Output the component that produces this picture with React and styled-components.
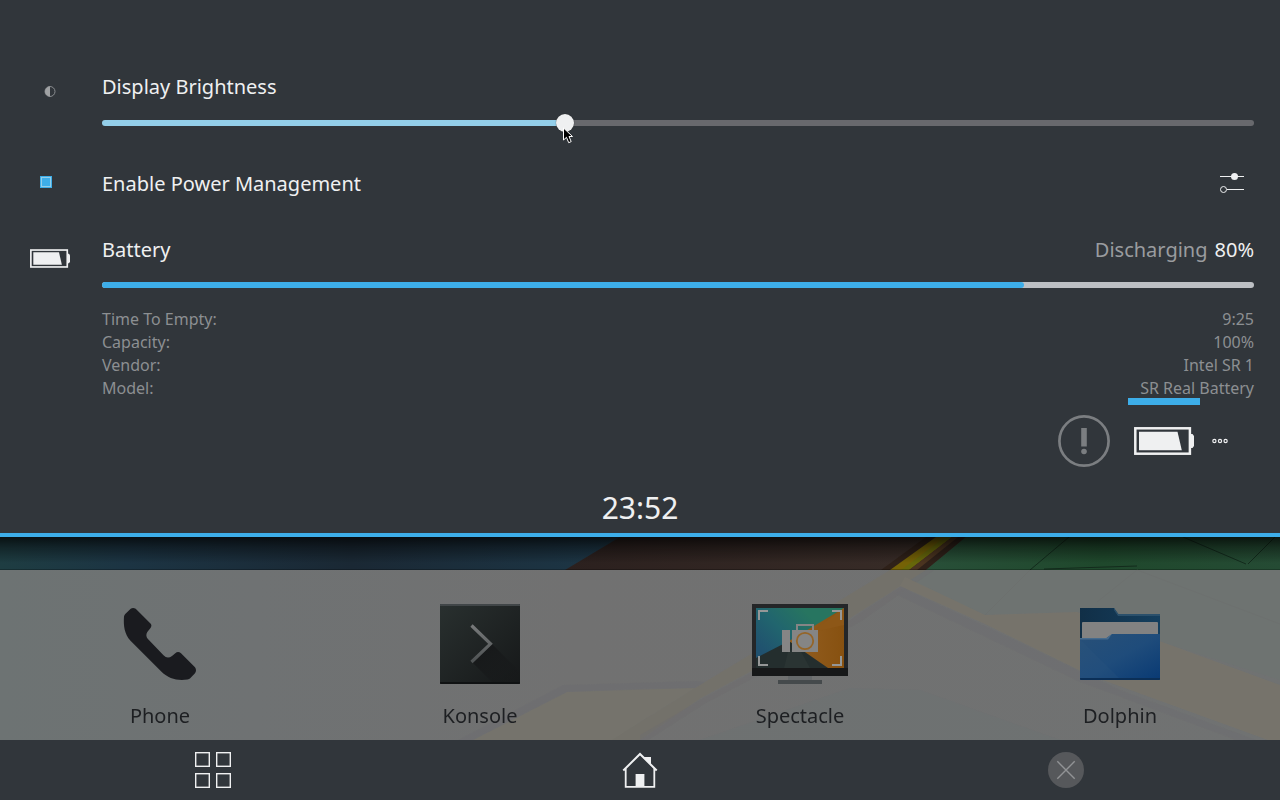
import React, { useState } from "react";
import styled, { createGlobalStyle } from "styled-components";

const GlobalStyle = createGlobalStyle`
  * { box-sizing: border-box; }
  body { margin: 0; background: #31363b; color: #eff0f1; }
  body, button, input { font-family: "Noto Sans", sans-serif; }
  svg { display: block; flex: none; }
  dl, dd, dt, ul { margin: 0; padding: 0; }
`;

const Screen = styled.div`
  display: flex;
  flex-direction: column;
  min-height: 100vh;
`;

const Panel = styled.section`
  display: flex;
  flex-direction: column;
  padding-top: 73px;
  border-bottom: 4px solid #3daee9;
  background: #31363b;
`;

const Row = styled.div`
  display: grid;
  grid-template-columns: 100px 1fr;
  column-gap: 2px;
  padding-right: 26px;
  margin-bottom: ${(p) => p.$space || 0}px;
`;

const IconCell = styled.div`
  display: flex;
  align-items: center;
  justify-content: center;
  height: ${(p) => p.$height}px;
`;

const Line = styled.div`
  display: flex;
  align-items: center;
  justify-content: space-between;
  height: 28px;
`;

const Label = styled.label`
  font-size: 20px;
  line-height: 28px;
`;

const State = styled.span`
  display: flex;
  gap: 7px;
  font-size: 20px;
  line-height: 28px;
  color: #9a9c9f;
`;

const Percent = styled.span`
  color: #eff0f1;
`;

const SliderBox = styled.div`
  position: relative;
  display: flex;
  margin-top: 13px;
`;

const Slider = styled.input`
  appearance: none;
  width: 100%;
  height: 18px;
  margin: 0;
  background: none;
  outline: none;

  &::-webkit-slider-runnable-track {
    height: 6px;
    border-radius: 3px;
    background: linear-gradient(
      to right,
      #93cee9 ${(p) => p.$value}%,
      #68696d ${(p) => p.$value}%
    );
  }

  &::-webkit-slider-thumb {
    appearance: none;
    width: 18px;
    height: 18px;
    margin-top: -6px;
    border-radius: 50%;
    background: #eff0f1;
    box-shadow: 0 0 1px #222;
  }
`;

const Pointer = styled.svg`
  position: absolute;
  top: 13px;
  left: 40%;
  pointer-events: none;
`;

const CheckSlot = styled.div`
  display: flex;
  align-items: flex-start;
  width: 20px;
  height: 16px;
`;

const Check = styled.input`
  appearance: none;
  width: 12px;
  height: 12px;
  margin: 0;
  border: 1px solid #3daee9;
  background: #31363b;

  &:checked {
    background: #3daee9;
    box-shadow: inset 0 0 0 1px #93cee9;
  }
`;

const IconButton = styled.button`
  display: flex;
  align-items: center;
  justify-content: center;
  width: 44px;
  height: 28px;
  padding: 0;
  border: 0;
  background: none;
  color: #eff0f1;
`;

const Charge = styled.progress`
  appearance: none;
  display: block;
  width: 100%;
  height: 6px;
  margin: 18px 0 20px;
  border: 0;
  border-radius: 3px;
  overflow: hidden;
  background: #bdc3c7;

  &::-webkit-progress-bar { background: #bdc0c4; }
  &::-webkit-progress-value { background: #3daee9; border-radius: 0 3px 3px 0; }
`;

const Details = styled.dl`
  display: flex;
  flex-direction: column;
`;

const Detail = styled.div`
  display: flex;
  justify-content: space-between;
  font-size: 16px;
  line-height: 23px;
  color: #8c8f92;
`;

const Tray = styled.div`
  display: flex;
  align-items: center;
  justify-content: flex-end;
  gap: 8px;
  height: 82px;
  padding-right: 48px;
`;

const TrayButton = styled.button`
  position: relative;
  display: flex;
  align-items: center;
  justify-content: center;
  width: ${(p) => p.$width || 72}px;
  height: 82px;
  padding: 0;
  border: 0;
  background: none;
  color: ${(p) => (p.$muted ? "#7b7e81" : "#eff0f1")};
`;

const ActiveMark = styled.span`
  position: absolute;
  top: -2px;
  left: 0;
  right: 0;
  height: 7px;
  background: #3daee9;
`;

const Clock = styled.time`
  padding: 6px 0 5px;
  font-size: 30px;
  line-height: 40px;
  text-align: center;
`;

const Home = styled.main`
  position: relative;
  display: flex;
  flex: 1;
  flex-direction: column;
  justify-content: flex-end;
  padding-top: 33px;
  overflow: hidden;
`;

const Wallpaper = styled.svg`
  position: absolute;
  inset: 0;
  width: 100%;
  height: 100%;
`;

const Dock = styled.nav`
  position: relative;
  display: grid;
  grid-template-columns: repeat(4, 1fr);
`;

const AppButton = styled.button`
  display: flex;
  flex-direction: column;
  align-items: center;
  gap: 18px;
  padding: 34px 0 10px;
  border: 0;
  background: none;
  color: #1d1f22;
  font-size: 20px;
  line-height: 28px;
`;

const NavBar = styled.nav`
  display: grid;
  grid-template-columns: repeat(3, 1fr);
  height: 60px;
  background: #31363b;
`;

const NavButton = styled.button`
  display: flex;
  align-items: center;
  justify-content: center;
  padding: 0;
  border: 0;
  background: none;
  color: #eff0f1;
`;

function BatteryIcon({ width, height }) {
  return (
    <svg width={width} height={height} viewBox="0 0 60 28" aria-hidden="true">
      <rect x="1.3" y="1.3" width="54.6" height="25.4" fill="none" stroke="currentColor" strokeWidth="2.5" />
      <path d="M5 4.8H43.5L47.8 23.2H5Z" fill="currentColor" />
      <path d="M57 7H58.5L60 9V19L58.5 21H57Z" fill="currentColor" />
    </svg>
  );
}

function BrightnessIcon() {
  return (
    <svg width="12" height="12" viewBox="0 0 12 12" aria-hidden="true">
      <circle cx="6" cy="6.5" r="5" fill="none" stroke="#898c8f" />
      <path d="M6 1.5A5 5 0 0 0 6 11.5Z" fill="#a0a2a4" />
    </svg>
  );
}

function TuneIcon() {
  return (
    <svg width="24" height="22" viewBox="0 0 24 22" aria-hidden="true">
      <path d="M0 3.5H24M7 16.5H24" stroke="currentColor" />
      <circle cx="14.5" cy="3.5" r="3.5" fill="currentColor" />
      <circle cx="3.5" cy="16.5" r="3" fill="none" stroke="currentColor" />
    </svg>
  );
}

function AlertIcon() {
  return (
    <svg width="52" height="52" viewBox="0 0 52 52" aria-hidden="true">
      <circle cx="26" cy="26" r="24.6" fill="none" stroke="currentColor" strokeWidth="2.7" />
      <rect x="23.2" y="13" width="5.6" height="18.5" fill="currentColor" />
      <circle cx="26" cy="36.5" r="2.8" fill="currentColor" />
    </svg>
  );
}

function DotsIcon() {
  return (
    <svg width="16" height="6" viewBox="0 0 16 6" fill="none" stroke="currentColor" strokeWidth="1.2" aria-hidden="true">
      <circle cx="2.4" cy="3" r="1.6" />
      <circle cx="8" cy="3" r="1.6" />
      <circle cx="13.6" cy="3" r="1.6" />
    </svg>
  );
}

function PhoneIcon() {
  return (
    <svg width="96" height="80" viewBox="0 0 96 80" aria-hidden="true">
      <path
        fill="#1a1b1f"
        d="M12 12.5Q12.300 11 13.500 9.800L18.700 4.800Q21 3 23.700 4.800L38.700 19.700Q40.300 21.600 38.300 24.200L35.300 28Q33.200 31.500 35.700 34.800L51.500 51.300Q55.500 55.500 60 52L63.300 49.200Q66 46.700 69 49.200L83 63.200Q85 66 83 69.300L78.200 74.200Q77.300 75.200 75.500 75.500C65 77 56.500 74.500 49.500 67.700L18.500 36.700C12.500 30 11.300 22 12 12.500Z"
      />
    </svg>
  );
}

function KonsoleIcon() {
  return (
    <svg width="96" height="80" viewBox="0 0 96 80" aria-hidden="true">
      <defs>
        <linearGradient id="konsole" x1="0" y1="0" x2="1" y2="1">
          <stop offset="0" stopColor="#29302f" />
          <stop offset="1" stopColor="#161819" />
        </linearGradient>
        <linearGradient id="konsoleShade" x1="0" y1="0" x2="1" y2="1">
          <stop offset="0.2" stopColor="#17191a" />
          <stop offset="1" stopColor="#17191a" stopOpacity="0.2" />
        </linearGradient>
        <linearGradient id="chevron" x1="0" y1="0" x2="0" y2="1">
          <stop offset="0" stopColor="#77797a" />
          <stop offset="1" stopColor="#4e5253" />
        </linearGradient>
      </defs>
      <rect x="8" width="80" height="80" rx="1" fill="url(#konsole)" />
      <path d="M60 40L88 68V78H60L40 58Z" fill="url(#konsoleShade)" />
      <path d="M8 1Q8 0 9 0H87Q88 0 88 1V2H8Z" fill="#414648" />
      <path d="M8 78H88V79Q88 80 87 80H9Q8 80 8 79Z" fill="#101213" />
      <path d="M39.500 21.500L58.500 39.800L39.500 58" fill="none" stroke="url(#chevron)" strokeWidth="3.200" />
    </svg>
  );
}

function SpectacleIcon() {
  return (
    <svg width="96" height="80" viewBox="0 0 96 80" aria-hidden="true">
      <defs>
        <linearGradient id="specSky" gradientUnits="userSpaceOnUse" x1="8" y1="46" x2="50" y2="4">
          <stop offset="0" stopColor="#20516f" />
          <stop offset="0.500" stopColor="#21656e" />
          <stop offset="1" stopColor="#277560" />
        </linearGradient>
        <linearGradient id="specSun" x1="0" y1="0" x2="1" y2="0">
          <stop offset="0" stopColor="#945f22" />
          <stop offset="1" stopColor="#875110" />
        </linearGradient>
      </defs>
      <rect width="96" height="72" fill="#242628" />
      <rect y="64" width="96" height="8" fill="#171819" />
      <rect x="4" y="4" width="88" height="60" fill="url(#specSky)" />
      <path d="M4 54L37 37L80 64H4Z" fill="#242e2e" />
      <path d="M36 48L46 42L58 64H32Z" fill="#2a3433" />
      <path d="M92 4V64H76L37 37Z" fill="url(#specSun)" />
      <path d="M92 21L58 29L92 4Z" fill="#8d5717" />
      <path d="M7 16V7H16M80 7H89V16M7 52V61H16M80 61H89V52" fill="none" stroke="#959797" strokeWidth="2" />
      <rect x="30" y="26" width="8" height="22" fill="#858585" />
      <rect x="40" y="26" width="26" height="22" fill="#858585" />
      <path d="M45 26V21H61V26" fill="none" stroke="#858585" strokeWidth="2" />
      <circle cx="53" cy="37" r="8.200" fill="#858585" stroke="#956528" strokeWidth="1.800" />
      <rect x="36" y="72" width="24" height="4" fill="#65686a" />
      <rect x="26" y="76" width="44" height="4" fill="#454a4c" />
    </svg>
  );
}

function FolderIcon() {
  return (
    <svg width="96" height="80" viewBox="0 0 96 80" aria-hidden="true">
      <defs>
        <linearGradient id="folder" x1="0" y1="0" x2="1" y2="1">
          <stop offset="0" stopColor="#285078" />
          <stop offset="0.500" stopColor="#1f4c7b" />
          <stop offset="1" stopColor="#093a74" />
        </linearGradient>
        <linearGradient id="folderBack" x1="0" y1="0" x2="1" y2="0">
          <stop offset="0" stopColor="#112f47" />
          <stop offset="1" stopColor="#153f5e" />
        </linearGradient>
      </defs>
      <path d="M8 4H42L46 10H88V60H8Z" fill="url(#folderBack)" />
      <path d="M42 4L46.500 10H88V12H46L42 6Z" fill="#2b506b" />
      <path d="M10 19Q10 18 11 18H85Q86 18 86 19V50H10Z" fill="#828282" />
      <path d="M8 34H34.500L40 30H88V75Q88 76 87 76H9Q8 76 8 75Z" fill="url(#folder)" />
      <path d="M8 34H34.500L40 30L36 35.500H8Z" fill="#466b8d" />
      <path d="M8 35.500L47 74H8Z" fill="#315b83" opacity="0.200" />
      <path d="M8 74H88V75Q88 76 87 76H9Q8 76 8 75Z" fill="#0b2f57" />
    </svg>
  );
}

function OverviewIcon() {
  return (
    <svg width="36" height="36" viewBox="0 0 36 36" fill="none" stroke="currentColor" strokeWidth="1.400" aria-hidden="true">
      <rect x="0.700" y="0.700" width="13.600" height="13.600" />
      <rect x="21.700" y="0.700" width="13.600" height="13.600" />
      <rect x="0.700" y="21.700" width="13.600" height="13.600" />
      <rect x="21.700" y="21.700" width="13.600" height="13.600" />
    </svg>
  );
}

function HomeIcon() {
  return (
    <svg width="36" height="36" viewBox="0 0 36 36" aria-hidden="true">
      <path d="M1.300 18.500L18 2L34.700 18.500" fill="none" stroke="currentColor" strokeWidth="2" />
      <path d="M3.700 16.500V34.800H32.300V16.500" fill="none" stroke="currentColor" strokeWidth="1.800" />
      <path d="M21 5H29V13.500Z" fill="currentColor" />
      <rect x="13.600" y="22" width="8.800" height="13" fill="currentColor" />
    </svg>
  );
}

function CloseIcon() {
  return (
    <svg width="38" height="36" viewBox="0 0 38 36" aria-hidden="true">
      <circle cx="18" cy="18" r="18" fill="#56585b" />
      <path d="M9.300 9.300L26.700 26.700M26.700 9.300L9.300 26.700" stroke="#919395" strokeWidth="1.400" />
    </svg>
  );
}

function Backdrop() {
  return (
    <Wallpaper viewBox="0 537 1280 203" preserveAspectRatio="none" aria-hidden="true">
      <defs>
        <linearGradient id="sea" x1="0" y1="0" x2="1" y2="0">
          <stop offset="0" stopColor="#1e3d42" />
          <stop offset="0.200" stopColor="#1c3443" />
          <stop offset="0.550" stopColor="#1a2834" />
          <stop offset="1" stopColor="#1d3848" />
        </linearGradient>
        <linearGradient id="earth" x1="0" y1="0" x2="1" y2="0">
          <stop offset="0" stopColor="#2b201e" />
          <stop offset="1" stopColor="#3a2e29" />
        </linearGradient>
        <linearGradient id="grass" x1="0" y1="0" x2="1" y2="0">
          <stop offset="0" stopColor="#284f38" />
          <stop offset="0.500" stopColor="#1f482c" />
          <stop offset="1" stopColor="#254b34" />
        </linearGradient>
        <linearGradient id="mist" x1="0" y1="0" x2="1" y2="0">
          <stop offset="0" stopColor="#6d7373" />
          <stop offset="0.200" stopColor="#6f7273" />
          <stop offset="0.450" stopColor="#717171" />
          <stop offset="1" stopColor="#707272" />
        </linearGradient>
        <linearGradient id="cast" x1="0" y1="0" x2="0" y2="1">
          <stop offset="0" stopColor="#000" stopOpacity="0.720" />
          <stop offset="0.400" stopColor="#000" stopOpacity="0.380" />
          <stop offset="1" stopColor="#000" stopOpacity="0" />
        </linearGradient>
      </defs>
      <rect y="537" width="640" height="33" fill="url(#sea)" />
      <path d="M620 537H980V570H565Z" fill="url(#earth)" />
      <path d="M926 537H966L926 570H881Z" fill="#2f2119" />
      <path d="M936 537H952L909 570H890Z" fill="#756206" />
      <path d="M945 537H952L909 570H901Z" fill="#67670a" />
      <path d="M952 537H958L917 570H909Z" fill="#4b3420" />
      <path d="M966 537H1280V570H926Z" fill="url(#grass)" />
      <path d="M1069 537L1030 570M1183 537L1246 564M1275 537L1248 564M1044 569L1137 566" fill="none" stroke="#132b1c" />
      <rect y="537" width="1280" height="26" fill="url(#cast)" />
      <rect y="569" width="1280" height="1" fill="#000" opacity="0.250" />

      <rect y="570" width="1280" height="170" fill="url(#mist)" />
      <g opacity="0.750">
        <path d="M926 570H1280V680L1162 642L1077 612L985 615L905 580Z" fill="#6e7472" />
        <path d="M982 618L1030 570M1097 602L1137 570L1280 624" fill="none" stroke="#6b6f6d" opacity="0.600" />
        <path d="M890 570H926L844 622L701 698L640 740H610L640 722L695 688Z" fill="#757269" />
        <path d="M926 570L850 620L700 700L640 735V740H648L704 704L860 622L934 570Z" fill="#6d6c6d" opacity="0.500" />
        <path d="M905 577L985 615L1077 612L1162 642L1280 685V740L1268 740L1089 675L985 624L900 586Z" fill="#79756a" />
        <path d="M903 588L985 626L1120 690L1256 740H1236L1080 682L895 594Z" fill="#6e6d70" opacity="0.700" />
        <path d="M473 740L567 692L640 689L695 688L640 722L612 740Z" fill="#77756b" />
        <path d="M458 740L563 685L695 681L705 682L695 688L567 692L473 740Z" fill="#6d6d70" opacity="0.700" />
        <path d="M700 740L850 688L920 690L1060 740Z" fill="#6d7273" opacity="0.600" />
      </g>
    </Wallpaper>
  );
}

const details = [
  ["Time To Empty:", "9:25"],
  ["Capacity:", "100%"],
  ["Vendor:", "Intel SR 1"],
  ["Model:", "SR Real Battery"],
];

const apps = [
  ["Phone", PhoneIcon],
  ["Konsole", KonsoleIcon],
  ["Spectacle", SpectacleIcon],
  ["Dolphin", FolderIcon],
];

export default function App() {
  const [brightness, setBrightness] = useState(40);
  const [managed, setManaged] = useState(true);

  return (
    <Screen>
      <GlobalStyle />
      <Panel>
        <Row $space={38}>
          <IconCell $height={36}>
            <BrightnessIcon />
          </IconCell>
          <div>
            <Line>
              <Label htmlFor="brightness">Display Brightness</Label>
            </Line>
            <SliderBox>
              <Slider
                id="brightness"
                type="range"
                min="0"
                max="100"
                value={brightness}
                $value={brightness}
                onChange={(e) => setBrightness(Number(e.target.value))}
              />
              <Pointer width="14" height="18" viewBox="0 0 14 18" aria-hidden="true">
                <path
                  d="M0.500 1V13L3.500 10.300L5.700 15.700L8.200 14.600L6 9.500H9.500Z"
                  fill="#000"
                  stroke="#fff"
                />
              </Pointer>
            </SliderBox>
          </div>
        </Row>

        <Row $space={38}>
          <IconCell $height={28}>
            <CheckSlot>
              <Check
                id="power"
                type="checkbox"
                checked={managed}
                onChange={(e) => setManaged(e.target.checked)}
              />
            </CheckSlot>
          </IconCell>
          <Line>
            <Label htmlFor="power">Enable Power Management</Label>
            <IconButton type="button" aria-label="Configure power management">
              <TuneIcon />
            </IconButton>
          </Line>
        </Row>

        <Row>
          <IconCell $height={45}>
            <BatteryIcon width="40" height="19" />
          </IconCell>
          <div>
            <Line>
              <Label htmlFor="charge">Battery</Label>
              <State>
                Discharging <Percent>80%</Percent>
              </State>
            </Line>
            <Charge id="charge" value="80" max="100" />
            <Details>
              {details.map(([name, value]) => (
                <Detail key={name}>
                  <dt>{name}</dt>
                  <dd>{value}</dd>
                </Detail>
              ))}
            </Details>
          </div>
        </Row>

        <Tray>
          <TrayButton type="button" $muted aria-label="Notifications">
            <AlertIcon />
          </TrayButton>
          <TrayButton type="button" aria-label="Battery and brightness">
            <ActiveMark />
            <BatteryIcon width="60" height="28" />
          </TrayButton>
          <TrayButton type="button" $width={24} aria-label="More">
            <DotsIcon />
          </TrayButton>
        </Tray>
        <Clock>23:52</Clock>
      </Panel>

      <Home>
        <Backdrop />
        <Dock aria-label="Favorites">
          {apps.map(([name, Icon]) => (
            <AppButton type="button" key={name}>
              <Icon />
              {name}
            </AppButton>
          ))}
        </Dock>
      </Home>

      <NavBar aria-label="System">
        <NavButton type="button" aria-label="Overview">
          <OverviewIcon />
        </NavButton>
        <NavButton type="button" aria-label="Home">
          <HomeIcon />
        </NavButton>
        <NavButton type="button" aria-label="Close">
          <CloseIcon />
        </NavButton>
      </NavBar>
    </Screen>
  );
}
